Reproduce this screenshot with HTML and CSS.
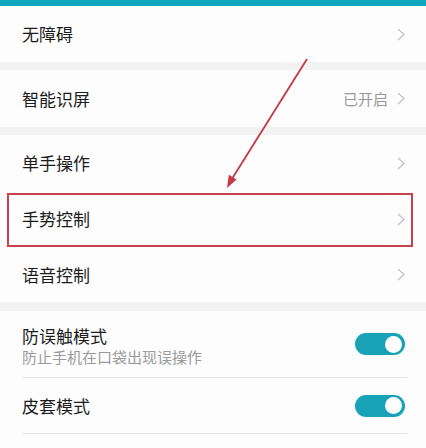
FILE: index.html
```html
<!DOCTYPE html>
<html lang="zh-CN">
<head>
<meta charset="utf-8">
<link rel="stylesheet" href="styles.css">
</head>
<body>
<div class="page">
  <div class="topbar"></div>
  <div class="row"><span class="title">无障碍</span><span class="right"><svg class="chev" viewBox="0 0 8 13"><polyline points="1,1 7,6.5 1,12"/></svg></span></div>
  <div class="gap"></div>
  <div class="row r57"><span class="title">智能识屏</span><span class="right"><span class="value">已开启</span><svg class="chev" viewBox="0 0 8 13"><polyline points="1,1 7,6.5 1,12"/></svg></span></div>
  <div class="gap"></div>
  <div class="row"><span class="title">单手操作</span><span class="right"><svg class="chev" viewBox="0 0 8 13"><polyline points="1,1 7,6.5 1,12"/></svg></span></div>
  <div class="row"><span class="title">手势控制</span><span class="right"><svg class="chev" viewBox="0 0 8 13"><polyline points="1,1 7,6.5 1,12"/></svg></span></div>
  <div class="row r55"><span class="title">语音控制</span><span class="right"><svg class="chev" viewBox="0 0 8 13"><polyline points="1,1 7,6.5 1,12"/></svg></span></div>
  <div class="gap g9"></div>
  <div class="row tall divided">
    <div class="texts"><span class="title">防误触模式</span><span class="sub">防止手机在口袋出现误操作</span></div>
    <span class="toggle"><span class="knob"></span></span>
  </div>
  <div class="row r55 divided">
    <span class="title">皮套模式</span>
    <span class="toggle"><span class="knob"></span></span>
  </div>
  <div class="highlight"></div>
  <svg class="annot" viewBox="0 0 426 448" width="426" height="448">
    <line x1="307" y1="59" x2="232.5" y2="178" class="arrow-line"/>
    <polygon points="227,188 236.6,179.6 228.8,174.8" class="arrow-head"/>
  </svg>
</div>
</body>
</html>
```
FILE: styles.css
```css
* { box-sizing: border-box; }
html, body { margin: 0; padding: 0; }
body {
  background: #fdfdfd;
  font-family: "Noto Sans CJK SC", "Noto Sans", sans-serif;
  width: 426px;
  height: 448px;
  overflow: hidden;
}
.page { position: relative; width: 426px; height: 448px; }
.topbar { height: 6px; background: #10a6bc; }
.gap { height: 8px; background: #f2f2f2; }
.gap.g9 { height: 9px; }
.row {
  height: 56px;
  display: flex;
  align-items: center;
  justify-content: space-between;
  padding: 0 21px 0 22px;
  background: #fdfdfd;
}
.row.r57 { height: 57px; }
.row.r55 { height: 55px; }
.row.tall { height: 66px; }
.row.divided { position: relative; }
.row.divided::after {
  content: "";
  position: absolute;
  left: 22px;
  right: 19px;
  bottom: -1px;
  height: 1px;
  background: #e6e6e6;
}
.row.divided + .row.divided { margin-top: 1px; }
.title { font-size: 17px; color: #1c1c1c; line-height: 22px; }
.texts { display: flex; flex-direction: column; gap: 0; padding-top: 3px; }
.sub { font-size: 15px; color: #9a9a9a; line-height: 20px; }
.right { display: flex; align-items: center; gap: 9px; }
.value { font-size: 15px; color: #999; }
.chev { width: 8px; height: 13px; fill: none; stroke: #c4c4c4; stroke-width: 1.4; }
.toggle {
  width: 50px;
  height: 22px;
  border-radius: 11px;
  background: #17a2b8;
  display: flex;
  align-items: center;
  justify-content: flex-end;
  padding: 0 3px;
}
.knob { width: 17px; height: 17px; border-radius: 50%; background: #fff; }
.highlight {
  position: absolute;
  left: 7px;
  top: 193px;
  width: 406px;
  height: 54px;
  border: 2px solid #c8414d;
}
.annot { position: absolute; left: 0; top: 0; pointer-events: none; }
.arrow-line { stroke: #c23a45; stroke-width: 1.8; }
.arrow-head { fill: #c23a45; }
```
